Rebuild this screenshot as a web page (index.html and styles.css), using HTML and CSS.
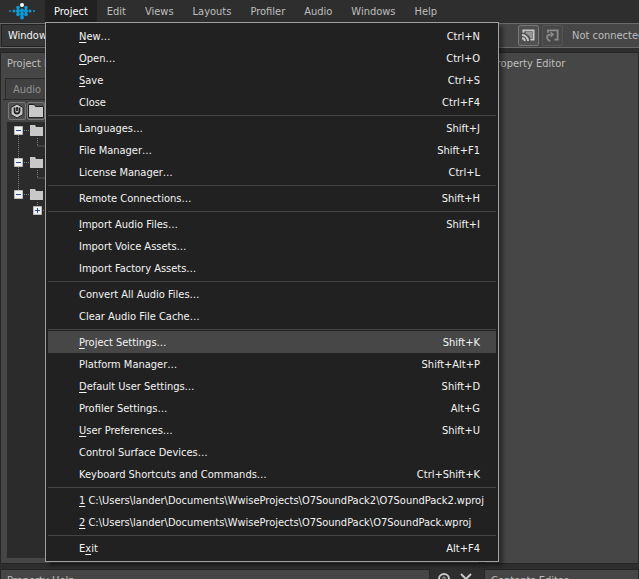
FILE: index.html
```html
<!DOCTYPE html>
<html lang="en">
<head>
<meta charset="utf-8">
<title>Wwise</title>
<link rel="stylesheet" href="styles.css">
</head>
<body>
<div class="app">
  <header class="menubar">
    <svg class="logo" viewBox="0 0 26 17" aria-hidden="true">
      <g fill="#0e9ad6">
        <circle cx="1" cy="8" r="1"/><circle cx="25" cy="8" r="1"/>
        <circle cx="5" cy="8" r="1.500"/><circle cx="21" cy="8" r="1.500"/>
        <rect x="8" y="4" width="2" height="9"/><rect x="16" y="4" width="2" height="9"/>
        <circle cx="9" cy="4.500" r="1.800"/><circle cx="17" cy="4.500" r="1.800"/>
        <circle cx="9" cy="8" r="2.100"/><circle cx="17" cy="8" r="2.100"/>
        <circle cx="9" cy="11.500" r="1.800"/><circle cx="17" cy="11.500" r="1.800"/>
        <rect x="12" y="6" width="2" height="9"/><circle cx="13" cy="7.500" r="2"/><circle cx="13" cy="11" r="2.100"/><circle cx="13" cy="14.500" r="2"/>
      </g>
      <circle cx="13" cy="2" r="2" fill="#fff"/>
    </svg>
    <nav class="menus">
      <div class="menu-root">
        <button class="top active">Project</button>
        <div class="dropdown" role="menu">
          <button class="item"><span><u>N</u>ew…</span><kbd>Ctrl+N</kbd></button>
          <button class="item"><span><u>O</u>pen…</span><kbd>Ctrl+O</kbd></button>
          <button class="item"><span><u>S</u>ave</span><kbd>Ctrl+S</kbd></button>
          <button class="item"><span>Close</span><kbd>Ctrl+F4</kbd></button>
          <hr>
          <button class="item"><span>Languages…</span><kbd>Shift+J</kbd></button>
          <button class="item"><span>File Manager…</span><kbd>Shift+F1</kbd></button>
          <button class="item"><span>License Manager…</span><kbd>Ctrl+L</kbd></button>
          <hr>
          <button class="item"><span>Remote Connections…</span><kbd>Shift+H</kbd></button>
          <hr>
          <button class="item"><span><u>I</u>mport Audio Files…</span><kbd>Shift+I</kbd></button>
          <button class="item"><span>Import Voice Assets…</span></button>
          <button class="item"><span>Import Factory Assets…</span></button>
          <hr>
          <button class="item"><span>Convert All Audio Files…</span></button>
          <button class="item"><span>Clear Audio File Cache…</span></button>
          <hr>
          <button class="item selected"><span><u>P</u>roject Settings…</span><kbd>Shift+K</kbd></button>
          <button class="item"><span>Platform Manager…</span><kbd>Shift+Alt+P</kbd></button>
          <button class="item"><span><u>D</u>efault User Settings…</span><kbd>Shift+D</kbd></button>
          <button class="item"><span>Profiler Settings…</span><kbd>Alt+G</kbd></button>
          <button class="item"><span><u>U</u>ser Preferences…</span><kbd>Shift+U</kbd></button>
          <button class="item"><span>Control Surface Devices…</span></button>
          <button class="item"><span>Keyboard Shortcuts and Commands…</span><kbd>Ctrl+Shift+K</kbd></button>
          <hr>
          <button class="item"><span><u>1</u> C:\Users\lander\Documents\WwiseProjects\O7SoundPack2\O7SoundPack2.wproj</span></button>
          <button class="item"><span><u>2</u> C:\Users\lander\Documents\WwiseProjects\O7SoundPack\O7SoundPack.wproj</span></button>
          <hr>
          <button class="item"><span>E<u>x</u>it</span><kbd>Alt+F4</kbd></button>
        </div>
      </div>
      <button class="top">Edit</button>
      <button class="top">Views</button>
      <button class="top">Layouts</button>
      <button class="top">Profiler</button>
      <button class="top">Audio</button>
      <button class="top">Windows</button>
      <button class="top">Help</button>
    </nav>
  </header>

  <div class="toolbar">
    <button class="platform">Windows</button>
    <div class="remote">
      <button class="remote-button" aria-label="Remote connections">
        <svg viewBox="0 0 14 14" aria-hidden="true"><path d="M1.500 4V1.500h11v10H9" fill="none" stroke="#c8c8c8" stroke-width="2"/><path d="M4 3h7v7H9C8 7 7 6 4 5z" fill="#999"/><path d="M0 6.500A6.500 6.500 0 0 1 6.500 13M0 10a3 3 0 0 1 3 3" fill="none" stroke="#c8c8c8" stroke-width="2"/></svg>
      </button>
      <button class="remote-button dim" aria-label="Reconnect">
        <svg viewBox="0 0 14 14" aria-hidden="true"><path d="M2 4V1.500h10.500v10H9" fill="none" stroke="#8a8a8a" stroke-width="2"/><path d="M4.500 13C0 11 0 6 5 6" fill="none" stroke="#8a8a8a" stroke-width="2"/><path d="M5 2.500l4 3.500-4 3.500z" fill="#8a8a8a"/></svg>
      </button>
      <span class="status">Not connected</span>
    </div>
  </div>

  <main class="panels">
    <section class="panel explorer">
      <h2>Project Explorer</h2>
      <div class="tabs"><button class="tab">Audio</button></div>
      <div class="tools">
        <button class="tool" aria-label="Work unit"><svg viewBox="0 0 16 16" aria-hidden="true"><path d="M8 1l6 3.500v7L8 15l-6-3.500v-7z" fill="#c8c8c8" stroke="#222"/><path d="M5.500 4.500V8a2.500 2.500 0 0 0 5 0V4.500M8 4v4" fill="none" stroke="#222" stroke-width="1.800"/></svg></button>
        <button class="tool" aria-label="Folder"><svg viewBox="0 0 16 16" aria-hidden="true"><path d="M.5 1.500h6l1 2h8v11H.5z" fill="#c8c8c8" stroke="#222"/></svg></button>
      </div>
      <div class="tree">
        <svg viewBox="0 0 60 96" class="tree-art" aria-hidden="true">
          <g stroke="#808080" stroke-dasharray="1 1" fill="none"><path d="M11.500 13v23M11.500 45v23M17 8.500h6M17 40.500h6M17 72.500h6M30.500 16v8h8M30.500 48v8h8M30.500 80v4M36 88.500h6"/></g>
          <path d="M23 3h5l1 2h7v9H23zM23 35h5l1 2h7v9H23zM23 67h5l1 2h7v9H23z" fill="#c8c8c8"/>
          <path d="M7.500 4.500h8v8h-8zM7.500 36.500h8v8h-8zM7.500 68.500h8v8h-8zM26.500 84.500h8v8h-8z" fill="#f2f2f2" stroke="#bbb"/>
          <path d="M9 8.500h5M9 40.500h5M9 72.500h5M28 88.500h5M30.500 86v5" stroke="#2b4a9b"/>
        </svg>
      </div>
    </section>
    <section class="panel"><h2>Property Editor</h2></section>
  </main>

  <footer class="bottom">
    <section class="panel"><h2>Property Help</h2></section>
    <div class="panel-tools">
      <button aria-label="Help"><svg viewBox="0 0 14 14" aria-hidden="true"><circle cx="7" cy="7" r="5" fill="none" stroke="#c8c8c8" stroke-width="2"/><path d="M5.500 6.500C6 4 9 5 8 7L7 8v2" fill="none" stroke="#c8c8c8"/></svg></button>
      <button aria-label="Close"><svg viewBox="0 0 14 14" aria-hidden="true"><path d="M2 2l10 10M12 2L2 12" fill="none" stroke="#c8c8c8" stroke-width="2"/></svg></button>
    </div>
    <section class="panel"><h2>Contents Editor</h2></section>
  </footer>
</div>
</body>
</html>
```
FILE: styles.css
```css
* { box-sizing: border-box; }
body {
  margin: 0;
  background: #2e2e2e;
  color: #bebebe;
  font: 11px/16px "DejaVu Sans Condensed", sans-serif;
  overflow: hidden;
}
button, kbd { font: inherit; color: inherit; }
button { border: 0; padding: 0; background: none; text-align: left; white-space: nowrap; }
svg { display: block; }
h2 { margin: 0; padding: 3px 6px; font: inherit; white-space: nowrap; }

.app { height: 100vh; display: flex; flex-direction: column; }

/* Menu bar */
.menubar { display: flex; flex: none; height: 23px; }
.logo { width: 26px; height: 17px; margin: 3px 10px 0 9px; }
.menus { display: flex; gap: 1px; }
.menu-root { position: relative; }
.top { height: 22px; padding: 1px 9px 0; }
.top.active { background: #212121; color: #fff; }
.dropdown {
  position: absolute;
  z-index: 2;
  left: 0;
  top: 22px;
  width: 454px;
  padding: 2px;
  border: 1px solid #a0a0a0;
  background: #212121;
  color: #f4f4f4;
  box-shadow: 4px 4px 4px #0006;
}
.item {
  display: flex;
  align-items: center;
  justify-content: space-between;
  width: 100%;
  height: 22px;
  padding: 1px 16px 0 31px;
}
.item u { text-underline-offset: 2px; }
.selected { background: #474747; }
hr { height: 1px; margin: 2px 0 1px; border: 0; background: #444; }

/* Toolbar */
.toolbar {
  display: grid;
  grid-template-columns: 1fr 121px;
  flex: none;
  height: 25px;
  border: solid #6a6a6a;
  border-width: 1px 0;
  background: #464646;
}
.platform { width: 120px; margin-left: 1px; padding: 1px 0 0 6px; border: 1px solid #222; background: #373737; color: #f4f4f4; }
.remote { display: flex; align-items: center; gap: 3px; white-space: nowrap; }
.remote-button { flex: none; width: 21px; height: 21px; padding: 3px; border: 1px solid #777; border-radius: 2px; background: #505050; }
.dim { border-color: #555; background: #484848; }
.status { margin-left: 6px; padding-top: 1px; }

/* Panels */
.panels { display: grid; grid-template-columns: 480fr 155fr; gap: 4px; flex: 1; margin: 4px 0 5px; }
.panel { min-width: 0; border: 1px solid #252525; background: #464646; overflow: hidden; }
.explorer { display: flex; flex-direction: column; }
.tabs { display: flex; height: 22px; margin: 3px 2px 0; padding-left: 2px; border-bottom: 1px solid #2a2a2a; }
.tab { padding: 1px 40px 0 7px; border: solid #2a2a2a; border-width: 1px 0 0 1px; background: #414141; color: #929292; }
.tools { display: flex; gap: 1px; padding: 2px 7px; }
.tool { width: 18px; height: 18px; border: 1px solid #777; border-radius: 2px; background: #505050; }
.tree { flex: 1; margin: 0 6px 5px; background: #2b2b2b; }
.tree-art { width: 60px; height: 96px; }

.bottom { display: grid; grid-template-columns: 430fr 54fr 155fr; flex: none; height: 10px; }
.panel-tools { display: flex; gap: 8px; padding: 3px 0 0 7px; }
.panel-tools svg { width: 14px; height: 14px; }
```
